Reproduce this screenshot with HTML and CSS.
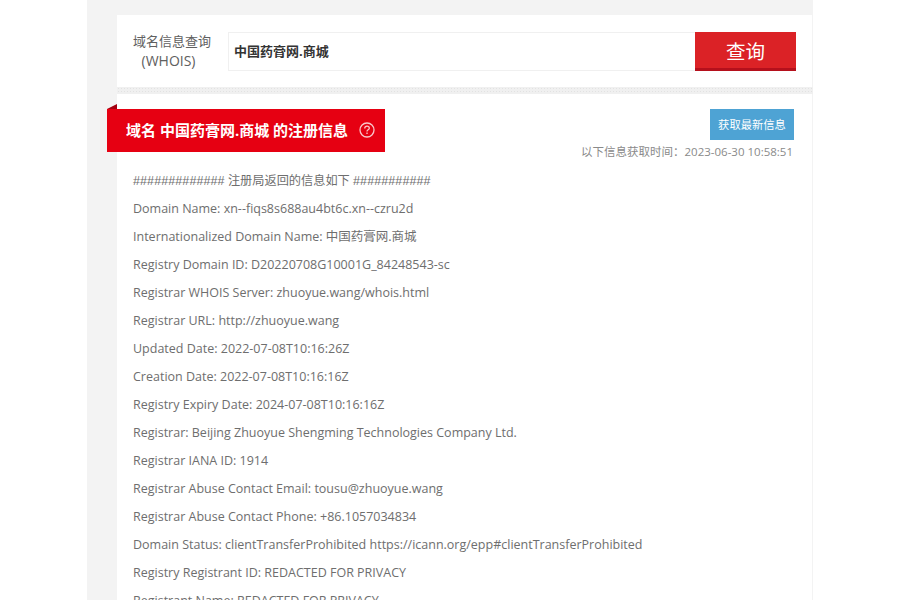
FILE: index.html
```html
<!DOCTYPE html>
<html lang="zh-CN">
<head>
<meta charset="utf-8">
<title>WHOIS</title>
<link rel="stylesheet" href="styles.css">
</head>
<body>
<div class="wrap">
  <section class="card search">
    <div class="search-label">域名信息查询<br><span class="whois">(WHOIS)</span></div>
    <div class="search-box">
      <div class="search-input">中国药膏网.商城</div>
      <div class="search-btn">查询</div>
    </div>
  </section>
  <div class="sep"></div>
  <section class="card result">
    <div class="result-head">
      <div class="ribbon">
        <span class="ribbon-fold"></span>
        <span class="ribbon-text">域名 中国药膏网.商城 的注册信息</span>
        <svg class="help" width="16" height="16" viewBox="0 0 16 16" fill="none" stroke="#f9c6cb" stroke-width="1.300">
          <circle cx="8" cy="8" r="7"/>
          <path d="M5.700 6.400c0-1.300 1-2.200 2.300-2.200s2.300.8 2.300 2c0 1.600-2.300 1.700-2.300 3.300"/>
          <path d="M8 10.600v1.400"/>
        </svg>
      </div>
      <div class="meta">
        <div class="refresh">获取最新信息</div>
        <div class="time">以下信息获取时间：2023-06-30 10:58:51</div>
      </div>
    </div>
    <div class="lines">
      <p><span class="hash">#############</span> <span class="notice">注册局返回的信息如下</span> <span class="hash">###########</span></p>
      <p>Domain Name: xn--fiqs8s688au4bt6c.xn--czru2d</p>
      <p>Internationalized Domain Name: 中国药膏网.商城</p>
      <p>Registry Domain ID: D20220708G10001G_84248543-sc</p>
      <p>Registrar WHOIS Server: zhuoyue.wang/whois.html</p>
      <p>Registrar URL: http://zhuoyue.wang</p>
      <p>Updated Date: 2022-07-08T10:16:26Z</p>
      <p>Creation Date: 2022-07-08T10:16:16Z</p>
      <p>Registry Expiry Date: 2024-07-08T10:16:16Z</p>
      <p>Registrar: Beijing Zhuoyue Shengming Technologies Company Ltd.</p>
      <p>Registrar IANA ID: 1914</p>
      <p>Registrar Abuse Contact Email: tousu@zhuoyue.wang</p>
      <p>Registrar Abuse Contact Phone: +86.1057034834</p>
      <p>Domain Status: clientTransferProhibited https://icann.org/epp#clientTransferProhibited</p>
      <p>Registry Registrant ID: REDACTED FOR PRIVACY</p>
      <p>Registrant Name: REDACTED FOR PRIVACY</p>
    </div>
  </section>
</div>
</body>
</html>
```
FILE: styles.css
```css
html, body {
  margin: 0;
  padding: 0;
  height: 600px;
  overflow: hidden;
  background: #fff;
}
body {
  font-family: "Open Sans", "Noto Sans CJK SC", sans-serif;
  color: #6e6e6e;
  font-size: 12.5px;
}
.wrap {
  width: 696px;
  margin-left: 87px;
  padding: 15px 0 0 30px;
  background: #f3f3f3;
  height: 585px;
}
.card {
  width: 695px;
  background: #fff;
}
.search {
  height: 72px;
  display: flex;
  align-items: center;
  box-sizing: border-box;
  padding-left: 10px;
}
.search-label {
  width: 90px;
  padding-top: 1px;
  text-align: center;
  font-size: 13px;
  line-height: 19px;
  color: #606060;
}
.whois {
  display: inline-block;
  font-size: 14px;
  margin-right: 7px;
}
.search-box {
  margin-left: 11px;
  display: flex;
  width: 568px;
  height: 39px;
  box-sizing: border-box;
  border: 1px solid #f0f0f0;
  border-right: 0;
}
.search-input {
  flex: 1;
  padding-left: 5px;
  line-height: 37px;
  font-size: 13px;
  font-weight: 700;
  color: #333;
}
.search-btn {
  width: 101px;
  height: 39px;
  margin-top: -1px;
  box-sizing: border-box;
  background: #db2226;
  border-bottom: 3px solid #b5101c;
  color: #fff;
  font-size: 19.500px;
  line-height: 40px;
  text-align: center;
}
.sep {
  height: 7px;
  background-image: radial-gradient(circle, #e2e2e2 0.6px, transparent 0.8px);
  background-size: 3px 3px;
  background-color: #f0f0f0;
}
.result {
  height: 506px;
}
.result-head {
  display: flex;
  justify-content: space-between;
  padding-top: 15px;
  height: 58px;
}
.ribbon {
  position: relative;
  margin-left: -10px;
  width: 278px;
  height: 43px;
  box-sizing: border-box;
  background: #e60012;
  color: #fff;
  display: flex;
  align-items: center;
  padding: 0 0 2px 19px;
}
.ribbon-fold {
  position: absolute;
  left: 0;
  top: -5px;
  border-style: solid;
  border-width: 0 0 5px 10px;
  border-color: transparent transparent #a30010 transparent;
}
.ribbon-text {
  font-size: 15px;
  font-weight: 700;
}
.help {
  margin-left: 11px;
}
.meta {
  display: flex;
  flex-direction: column;
  align-items: flex-end;
  padding-right: 18px;
}
.refresh {
  width: 84px;
  height: 31px;
  background: #4ea3d4;
  color: #fff;
  font-size: 11.300px;
  line-height: 31px;
  text-align: center;
}
.time {
  margin-top: 4px;
  margin-right: 1px;
  font-size: 11.500px;
  line-height: 16px;
  color: #8a8a8a;
}
.lines {
  padding: 0 16px;
}
.lines p {
  margin: 0;
  height: 28px;
  line-height: 28px;
  white-space: nowrap;
}
.hash {
  font-family: "Liberation Sans", sans-serif;
  letter-spacing: 0.1px;
}
.notice {
  font-size: 12.200px;
}
```
